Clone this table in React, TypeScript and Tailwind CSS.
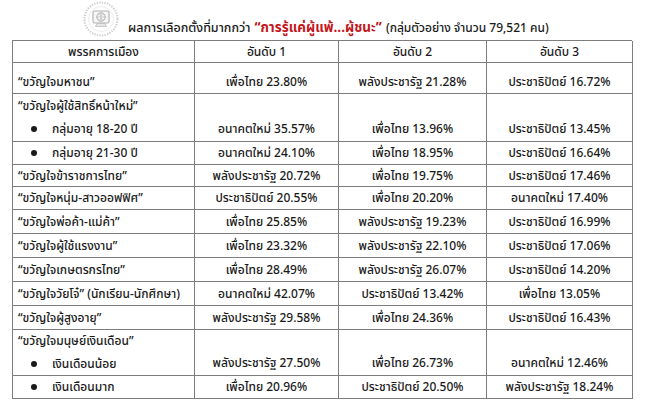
import React from 'react';

type Row = {
  label: string;
  group?: string;
  bullet?: boolean;
  values: string[];
  h: string;
};

const rows: Row[] = [
  { label: '“ขวัญใจมหาชน”', values: ['เพื่อไทย 23.80%', 'พลังประชารัฐ 21.28%', 'ประชาธิปัตย์ 16.72%'], h: 'h-[31px] pt-[8px]' },
  { group: '“ขวัญใจผู้ใช้สิทธิ์หน้าใหม่”', label: 'กลุ่มอายุ 18-20 ปี', bullet: true, values: ['อนาคตใหม่ 35.57%', 'เพื่อไทย 13.96%', 'ประชาธิปัตย์ 13.45%'], h: 'h-[48px]' },
  { label: 'กลุ่มอายุ 21-30 ปี', bullet: true, values: ['อนาคตใหม่ 24.10%', 'เพื่อไทย 18.95%', 'ประชาธิปัตย์ 16.64%'], h: 'h-[23px]' },
  { label: '“ขวัญใจข้าราชการไทย”', values: ['พลังประชารัฐ 20.72%', 'เพื่อไทย 19.75%', 'ประชาธิปัตย์ 17.46%'], h: 'h-[22px]' },
  { label: '“ขวัญใจหนุ่ม-สาวออฟฟิศ”', values: ['ประชาธิปัตย์ 20.55%', 'เพื่อไทย 20.20%', 'อนาคตใหม่ 17.40%'], h: 'h-[23px]' },
  { label: '“ขวัญใจพ่อค้า-แม่ค้า”', values: ['เพื่อไทย 25.85%', 'พลังประชารัฐ 19.23%', 'ประชาธิปัตย์ 16.99%'], h: 'h-[24px]' },
  { label: '“ขวัญใจผู้ใช้แรงงาน”', values: ['เพื่อไทย 23.32%', 'พลังประชารัฐ 22.10%', 'ประชาธิปัตย์ 17.06%'], h: 'h-[24px]' },
  { label: '“ขวัญใจเกษตรกรไทย”', values: ['เพื่อไทย 28.49%', 'พลังประชารัฐ 26.07%', 'ประชาธิปัตย์ 14.20%'], h: 'h-[24px]' },
  { label: '“ขวัญใจวัยโจ๋” (นักเรียน-นักศึกษา)', values: ['อนาคตใหม่ 42.07%', 'ประชาธิปัตย์ 13.42%', 'เพื่อไทย 13.05%'], h: 'h-[24px]' },
  { label: '“ขวัญใจผู้สูงอายุ”', values: ['พลังประชารัฐ 29.58%', 'เพื่อไทย 24.36%', 'ประชาธิปัตย์ 16.43%'], h: 'h-[24px]' },
  { group: '“ขวัญใจมนุษย์เงินเดือน”', label: 'เงินเดือนน้อย', bullet: true, values: ['พลังประชารัฐ 27.50%', 'เพื่อไทย 26.73%', 'อนาคตใหม่ 12.46%'], h: 'h-[46px]' },
  { label: 'เงินเดือนมาก', bullet: true, values: ['เพื่อไทย 20.96%', 'ประชาธิปัตย์ 20.50%', 'พลังประชารัฐ 18.24%'], h: 'h-[23px]' },
];

// faint institute seal beside the title
const Seal = () => (
  <svg width="38" height="36" viewBox="0 0 38 36" className="shrink-0">
    <circle cx="19" cy="18" r="16.5" fill="none" stroke="#d2d2d2" strokeWidth="2.2" strokeDasharray="1.4 1.2" />
    <circle cx="19" cy="18" r="12.5" fill="none" stroke="#e6e6e6" strokeWidth="0.8" />
    <rect x="11" y="10" width="16" height="12" rx="1.5" fill="#f6f6f6" stroke="#b0b0b0" strokeWidth="1.1" />
    <circle cx="19" cy="16" r="4.2" fill="none" stroke="#a5a5a5" strokeWidth="0.9" />
    <path d="M14.8 16h8.4M19 11.8v8.4M16.3 13.2c1.6 1.2 3.8 1.2 5.4 0M16.3 18.8c1.6-1.2 3.8-1.2 5.4 0" stroke="#b4b4b4" strokeWidth="0.6" fill="none" />
    <path d="M15 22.5h8l1.5 3h-11z" fill="#e6e6e6" stroke="#b8b8b8" strokeWidth="0.7" />
  </svg>
);

const cell = 'border-r border-b border-[#7d7d7d]';

const App = () => {
  return (
    <div
      className="w-[650px] h-[407px] bg-white text-[#1a1a1a] overflow-hidden font-medium"
      style={{ fontFamily: '"Noto Sans Thai", Tahoma, "Noto Sans", "DejaVu Sans", sans-serif' }}
    >
      {/* title */}
      <div className="flex items-end h-[40px] pl-[82px] pb-[1px]">
        <div className="self-start pt-[1px]">
          <Seal />
        </div>
        <div className="flex items-baseline ml-[8px] whitespace-nowrap">
          <span className="text-[12.5px]">ผลการเลือกตั้งที่มากกว่า</span>
          <span className="text-[13.5px] font-bold text-[#c3161c] ml-[4px]">“การรู้แค่ผู้แพ้...ผู้ชนะ”</span>
          <span className="text-[12px] ml-[4px]">(กลุ่มตัวอย่าง จำนวน 79,521 คน)</span>
        </div>
      </div>

      {/* table */}
      <div className="ml-[12px] w-[620px] grid grid-cols-[182px_144px_148px_146px] border-l border-t border-[#7d7d7d] text-[12px] leading-none">
        {['พรรคการเมือง', 'อันดับ 1', 'อันดับ 2', 'อันดับ 3'].map((t) => (
          <div key={t} className={`${cell} h-[22px] flex items-center justify-center`}>
            {t}
          </div>
        ))}

        {rows.map((r) => (
          <React.Fragment key={r.label}>
            <div className={`${cell} ${r.h} flex flex-col justify-center pl-[5px]`}>
              {r.group && <div className="h-[23px] flex items-center">{r.group}</div>}
              <div className={`flex items-center ${r.group ? 'h-[23px]' : ''}`}>
                {r.bullet && <span className="inline-block w-[6px] h-[6px] rounded-full bg-[#1a1a1a] ml-[13px] mr-[15px]" />}
                <span>{r.label}</span>
              </div>
            </div>
            {r.values.map((v, i) => (
              <div
                key={i}
                className={`${cell} ${r.h} flex justify-center ${r.group ? 'items-end pb-[6px]' : 'items-center'}`}
              >
                {v}
              </div>
            ))}
          </React.Fragment>
        ))}
      </div>
    </div>
  );
};

export default App;
